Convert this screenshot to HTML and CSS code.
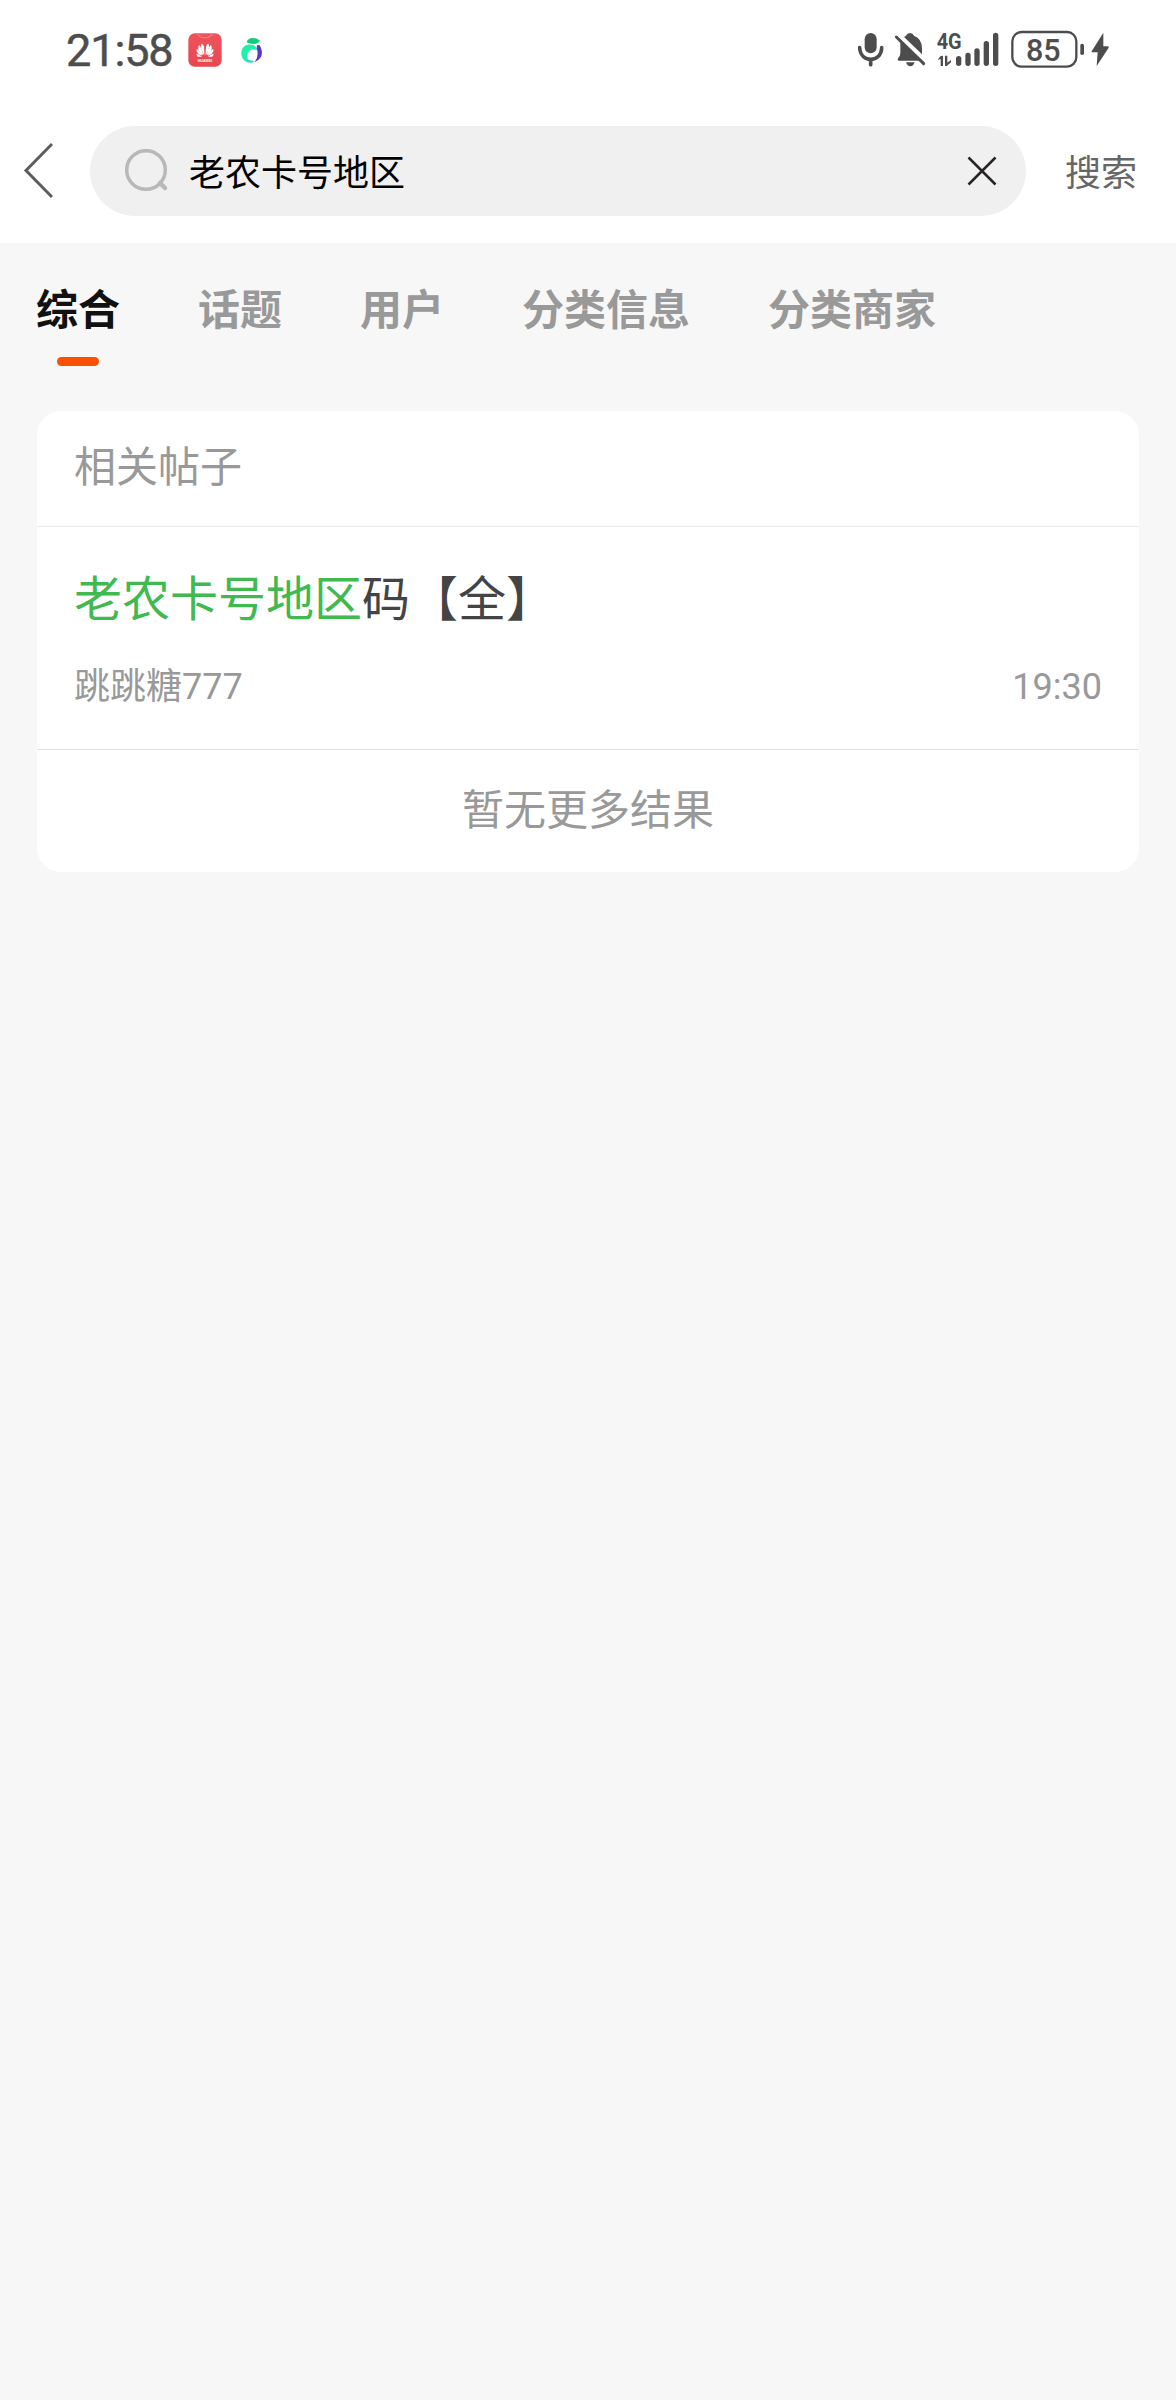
FILE: index.html
```html
<!DOCTYPE html>
<html lang="zh-CN">
<head>
<meta charset="utf-8">
<title>搜索</title>
<link rel="stylesheet" href="styles.css">
</head>
<body>
<div class="status">
  <span class="clock">21:58</span>
  <svg class="app-red" width="34" height="34" viewBox="0 0 102 102">
    <defs><linearGradient id="red" x1="0" y1="0" x2="0" y2="1"><stop offset="0" stop-color="#ef545b"/><stop offset="1" stop-color="#e84750"/></linearGradient></defs>
    <rect x="1" y="1" width="100" height="100" rx="19" fill="url(#red)"/>
    <path d="M29 3Q34 14 51 14T73 3" fill="none" stroke="#f98b8b" stroke-width="3"/>
    <g fill="#fff">
      <path d="M49 67C41 53 36 40 41 32Q50 31 49 67Z"/><path d="M53 67C61 53 66 40 61 32Q52 31 53 67Z"/>
      <path d="M46 67C31 57 28 47 33 36Q41 40 46 67Z"/><path d="M56 67C71 57 74 47 69 36Q61 40 56 67Z"/>
      <path d="M43 68C29 64 24 56 26 48Q35 51 43 68Z"/><path d="M59 68C73 64 78 56 76 48Q67 51 59 68Z"/>
      <path d="M42 71H29Q25 67 25 62Q34 64 42 71Z"/><path d="M60 71H73Q77 67 77 62Q68 64 60 71Z"/>
    </g>
    <text class="app-label" x="51" y="87" text-anchor="middle">HUAWEI</text>
  </svg>
  <svg class="app-green" width="24" height="30" viewBox="0 0 72 90">
    <path d="M20 19C22 4 43 1 60 14C50 28 34 25 20 19Z" fill="#13ce78"/>
    <path d="M38 27C16 20 3 36 4 54C6 72 20 83 36 79C25 76 19 66 23 53C27 41 40 37 51 43C51 35 46 29 38 27Z" fill="#1df2aa"/>
    <path d="M51 28Q60 24 62 34Q75 63 44 79Q58 60 50 36Z" fill="#5938c9"/>
    <path d="M18 71Q29 83 44 78L38 74Z" fill="#27cce0"/>
  </svg>
  <div class="system">
    <svg width="26" height="40" viewBox="52 30 78 120"><rect x="72" y="39" width="36" height="61" rx="18"/><path class="line" d="M57 83C58 130 122 130 123 83M90 119V134" stroke-width="11"/></svg>
    <svg class="bell" width="32" height="40" viewBox="162 30 96 120"><path d="M192 51L198 47Q201 39 210 39Q219 39 222 47Q246 56 246 85V103ZM181 62L240 122H175Q171 118 175 113Q181 108 181 98ZM198 127H224Q220 139 211 139Q202 139 198 127Z"/><path class="line" d="M169 51L251 131" stroke-width="9"/></svg>
    <svg class="signal" width="64" height="40" viewBox="288 30 192 120"><text class="net" x="290" y="86" textLength="75" lengthAdjust="spacingAndGlyphs">4G</text><path d="M301 109L309 107V138H302V117L293 120ZM315 107H322V128L333 120V127L320 138H315Z"/><g class="line"><path d="M356 116V130M384 106V130M411 93V130M439 71V130M467 46V130"/></g></svg>
    <svg class="battery" width="74" height="40" viewBox="512 30 222 120"><rect class="line" x="516" y="36" width="192" height="104" rx="28" stroke-width="7"/><rect x="720" y="71" width="11" height="34" rx="5"/><text class="level" x="609" y="122" text-anchor="middle" textLength="104" lengthAdjust="spacingAndGlyphs">85</text></svg>
    <svg class="bolt" width="18" height="40" viewBox="751 30 54 120"><path d="M788 38L753 94Q752 97 755 97H771L768 138L804 83Q805 79 801 79H788Z"/></svg>
  </div>
</div>
<header class="header">
  <svg class="back" width="32" height="60" viewBox="0 0 32 60"><path d="M31 4L5 30.500L31 57" fill="none" stroke="#5c5c5c" stroke-width="3"/></svg>
  <div class="search">
    <svg width="44" height="44" viewBox="0 0 44 44"><g fill="none" stroke="#b8b8b8" stroke-width="3.500"><circle cx="21" cy="21" r="19.300"/><path d="M35 34L40 39" stroke-width="4.500" stroke-linecap="round"/></g></svg>
    <span class="query">老农卡号地区</span>
    <svg class="clear" width="30" height="30" viewBox="0 0 30 30"><path d="M1.500 1.500L28.500 28.500M28.500 1.500L1.500 28.500" stroke="#292424" stroke-width="2.500"/></svg>
  </div>
  <span class="submit">搜索</span>
</header>
<nav class="tabs">
  <span class="tab active">综合</span>
  <span class="tab">话题</span>
  <span class="tab">用户</span>
  <span class="tab">分类信息</span>
  <span class="tab">分类商家</span>
</nav>
<main class="card">
  <h2 class="section">相关帖子</h2>
  <article class="post">
    <h3 class="title"><em>老农卡号地区</em>码【全】</h3>
    <div class="meta"><span>跳跳糖777</span><time>19:30</time></div>
  </article>
  <p class="end">暂无更多结果</p>
</main>
</body>
</html>
```
FILE: styles.css
```css
* { box-sizing: border-box; }
body {
  margin: 0;
  min-height: 2400px;
  background: #f7f7f7;
  font-family: "Noto Sans CJK SC", sans-serif;
  color: #999;
}
svg { display: block; flex: none; }
.status {
  display: flex;
  align-items: center;
  height: 98px;
  padding: 2px 67px 0 66px;
  background: #fff;
}
.clock {
  width: 122px;
  padding-top: 2px;
  font: 400 45px/60px Roboto, sans-serif;
  letter-spacing: -1.1px;
  color: #4d4d4d;
  -webkit-text-stroke: 0.5px #4d4d4d;
}
.app-label { font: 700 11px "Liberation Sans", sans-serif; fill: #fff; }
.app-green { margin: 1px 0 0 18px; }
.system { display: flex; margin-left: auto; fill: #4d4d4d; color: #4d4d4d; }
.line { fill: none; stroke: #4d4d4d; stroke-linecap: round; stroke-linejoin: round; }
.bell { margin-left: 10px; }
.signal { margin-left: 10px; }
.battery { margin-left: 11px; }
.bolt { margin-left: 6px; }
.net { font: 700 64px Roboto, sans-serif; }
.level { font: 500 95px Roboto, sans-serif; }
.signal .line { stroke-width: 16px; }
.header {
  display: flex;
  align-items: center;
  height: 145px;
  padding: 0 39px 0 21px;
  background: #fff;
}
.back { margin-top: -1px; }
.search {
  display: flex;
  align-items: center;
  width: 936px;
  height: 90px;
  margin-left: 37px;
  padding: 0 29px 0 35px;
  border-radius: 45px;
  background: #f0f0f0;
}
.query { margin: -2px 0 0 20px; font-size: 36px; line-height: 54px; color: #000; }
.clear { margin-left: auto; }
.submit { margin: -1px 0 0 auto; font-size: 36px; line-height: 54px; color: #666; }
.tabs {
  display: flex;
  gap: 78px;
  height: 168px;
  padding: 33px 36px 0;
}
.tab {
  display: flex;
  flex-direction: column;
  align-items: center;
  height: 90px;
  font-size: 42px;
  font-weight: 700;
  line-height: 62px;
}
.active { color: #111; }
.active::after {
  content: "";
  width: 42px;
  height: 9px;
  margin-top: 19px;
  border-radius: 4.5px;
  background: #fa5005;
}
.card {
  width: 1102px;
  margin-left: 37px;
  overflow: hidden;
  border-radius: 24px;
  background: #fff;
}
.section {
  height: 116px;
  margin: 0;
  padding: 22px 37px 0;
  border-bottom: 1px solid #ebebeb;
  font-size: 42px;
  font-weight: 400;
  line-height: 62px;
}
.post {
  height: 223px;
  padding: 33px 37px 0;
  border-bottom: 1px solid #e0e0e0;
}
.title {
  margin: 0;
  font-size: 48px;
  font-weight: 400;
  line-height: 70px;
  color: #444;
}
.title em { font-style: normal; color: #3fb950; }
.meta {
  display: flex;
  justify-content: space-between;
  margin-top: 30px;
  font-family: Roboto, "Noto Sans CJK SC", sans-serif;
  font-size: 36px;
  line-height: 54px;
}
.end {
  height: 122px;
  margin: 0;
  padding-top: 26px;
  text-align: center;
  font-size: 42px;
  line-height: 62px;
}
```
